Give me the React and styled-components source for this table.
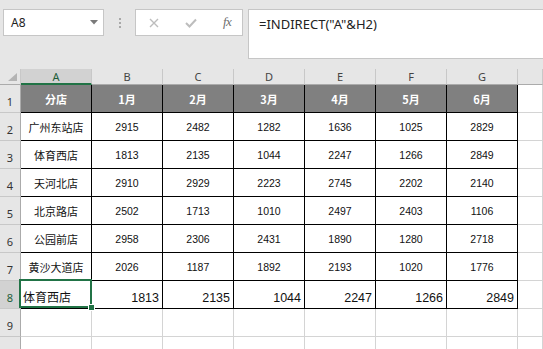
import React from 'react'
import styled, { createGlobalStyle } from 'styled-components';

// ______________________________________________
// Global styles:
const GlobalStyle = createGlobalStyle`
   html, body {
      margin: 0;
      padding: 0;
      background: #e6e6e6;
   }
`;

const UI_FONT = `"Noto Sans", "Liberation Sans", sans-serif`;
const CELL_FONT = `"Liberation Sans", "Noto Sans CJK SC", sans-serif`;

// Page wrapper:
const Page = styled.div`
   width: 543px;
   height: 349px;
   overflow: hidden;
   background: #e6e6e6;
   display: flex;
   flex-direction: column;
   & > * {
      flex-shrink: 0;
   }
`;

// Formula bar: __________________________________
const TopBar = styled.div`
   display: flex;
   align-items: flex-start;
   height: 69px;
   padding: 9px 0 0 3px;
   box-sizing: border-box;
`;

const NameBox = styled.div`
   width: 101px;
   height: 27px;
   box-sizing: border-box;
   background: #fff;
   border: 1px solid #c6c6c6;
   display: flex;
   align-items: center;
   justify-content: space-between;
   padding: 0 5px 0 7px;
   font-family: ${UI_FONT};
   font-size: 12px;
   color: #222;
`;

const Grip = styled.div`
   width: 31px;
   height: 27px;
   display: flex;
   flex-direction: column;
   align-items: center;
   justify-content: center;
   gap: 2px;
   span {
      width: 2px;
      height: 2px;
      background: #a8a8a8;
   }
`;

const FnBox = styled.div`
   width: 108px;
   height: 27px;
   box-sizing: border-box;
   background: #fff;
   border: 1px solid #c6c6c6;
   display: flex;
   align-items: center;
   gap: 26px;
   padding: 0 0 0 13px;
`;

const FxLabel = styled.span`
   font-family: "Liberation Serif", serif;
   font-style: italic;
   font-size: 13px;
   color: #6e6e6e;
   letter-spacing: -0.5px;
   margin-bottom: 2px;
`;

const FormulaBox = styled.div`
   flex: 1;
   margin-left: 5px;
   margin-right: -2px;
   height: 50px;
   box-sizing: border-box;
   background: #fff;
   border: 1px solid #c6c6c6;
   padding: 5px 0 0 10px;
   font-family: ${UI_FONT};
   font-size: 13px;
   color: #222;
`;

// Sheet grid: ___________________________________
const Sheet = styled.div`
   display: grid;
   grid-template-columns: 21px repeat(7, 71px) 1fr;
   grid-template-rows: 16px repeat(10, 28px);
   background: #fff;
`;

const Corner = styled.div`
   background: #e6e6e6;
   border-right: 1px solid #c8c8c8;
   border-bottom: 1px solid #ababab;
   box-sizing: border-box;
   display: flex;
   align-items: flex-end;
   justify-content: flex-end;
   padding: 0 3px 3px 0;
`;

const ColHead = styled.div`
   box-sizing: border-box;
   background: ${p => (p.$active ? '#d2d2d2' : '#e6e6e6')};
   border-right: 1px solid #c8c8c8;
   border-bottom: ${p => (p.$active ? '2px solid #217346' : '1px solid #ababab')};
   display: flex;
   align-items: center;
   justify-content: center;
   font-family: ${UI_FONT};
   font-size: 11px;
   color: ${p => (p.$active ? '#1e5e3a' : '#444')};
   padding-top: ${p => (p.$active ? '1px' : '0')};
`;

const RowHead = styled.div`
   box-sizing: border-box;
   background: ${p => (p.$active ? '#d2d2d2' : '#e6e6e6')};
   border-right: 1px solid #ababab;
   border-bottom: 1px solid #c8c8c8;
   display: flex;
   align-items: flex-end;
   justify-content: center;
   padding-bottom: 3px;
   font-family: ${UI_FONT};
   font-size: 11px;
   color: ${p => (p.$active ? '#1e5e3a' : '#333')};
`;

const Cell = styled.div`
   position: relative;
   box-sizing: border-box;
   border-right: 1px solid ${p => (p.$table ? '#000' : '#d4d4d4')};
   border-bottom: 1px solid ${p => (p.$table ? '#000' : '#d4d4d4')};
   background: ${p => (p.$head ? '#808080' : '#fff')};
   color: ${p => (p.$head ? '#fff' : '#111')};
   font-weight: ${p => (p.$head ? 700 : 400)};
   font-family: ${CELL_FONT};
   font-size: ${p => (p.$big ? '12.5px' : '10.5px')};
   display: flex;
   align-items: ${p => (p.$big ? 'flex-end' : 'center')};
   justify-content: ${p => p.$align || 'center'};
   padding: ${p => (p.$big ? '0 3px 3px 2px' : '0')};
   white-space: nowrap;
`;

const CnText = styled.span`
   font-family: "Noto Sans CJK SC", sans-serif;
   font-size: ${p => (p.$big ? '12px' : '11px')};
`;

// Selection frame over A8:
const Selection = styled.div`
   position: absolute;
   top: -2px;
   left: -2px;
   right: -1px;
   bottom: 0;
   border: 2px solid #217346;
   pointer-events: none;
   z-index: 2;
`;

const Handle = styled.div`
   position: absolute;
   right: -4px;
   bottom: -4px;
   width: 5px;
   height: 5px;
   background: #217346;
   box-shadow: 0 0 0 1px #fff;
`;

// ______________________________________________
// Data:
const COLS = ['A', 'B', 'C', 'D', 'E', 'F', 'G'];
const HEADER = ['分店', '1月', '2月', '3月', '4月', '5月', '6月'];
const ROWS = [
   ['广州东站店', 2915, 2482, 1282, 1636, 1025, 2829],
   ['体育西店', 1813, 2135, 1044, 2247, 1266, 2849],
   ['天河北店', 2910, 2929, 2223, 2745, 2202, 2140],
   ['北京路店', 2502, 1713, 1010, 2497, 2403, 1106],
   ['公园前店', 2958, 2306, 2431, 1890, 1280, 2718],
   ['黄沙大道店', 2026, 1187, 1892, 2193, 1020, 1776],
];
const RESULT = ['体育西店', 1813, 2135, 1044, 2247, 1266, 2849];

const App = () => {
    return (
        <Page>
            <GlobalStyle />
            <TopBar>
                <NameBox>
                    A8
                    <svg width="8" height="5" viewBox="0 0 8 5">
                        <polygon points="0,0 8,0 4,4.5" fill="#7a7a7a" />
                    </svg>
                </NameBox>
                <Grip><span /><span /><span /></Grip>
                <FnBox>
                    <svg width="10" height="10" viewBox="0 0 10 10">
                        <path d="M1 1 L9 9 M9 1 L1 9" stroke="#bdbdbd" strokeWidth="1.4" />
                    </svg>
                    <svg width="12" height="10" viewBox="0 0 12 10">
                        <path d="M1 5 L4.5 8.5 L11 1.5" stroke="#bdbdbd" strokeWidth="2" fill="none" />
                    </svg>
                    <FxLabel>fx</FxLabel>
                </FnBox>
                <FormulaBox>=INDIRECT("A"&amp;H2)</FormulaBox>
            </TopBar>

            <Sheet>
                {/* column headers */}
                <Corner>
                    <svg width="9" height="8" viewBox="0 0 9 8">
                        <polygon points="9,0 9,8 0,8" fill="#b4b4b4" />
                    </svg>
                </Corner>
                {COLS.map(c => (
                    <ColHead key={c} $active={c === 'A'}>{c}</ColHead>
                ))}
                <ColHead />

                {/* row 1: table header */}
                <RowHead>1</RowHead>
                {HEADER.map(h => (
                    <Cell key={h} $table $head><CnText>{h}</CnText></Cell>
                ))}
                <Cell />

                {/* rows 2-7 */}
                {ROWS.map((row, i) => (
                    <React.Fragment key={row[0]}>
                        <RowHead>{i + 2}</RowHead>
                        {row.map((v, j) => (
                            <Cell key={j} $table>
                                {j === 0 ? <CnText>{v}</CnText> : v}
                            </Cell>
                        ))}
                        <Cell />
                    </React.Fragment>
                ))}

                {/* row 8: lookup result */}
                <RowHead $active>8</RowHead>
                {RESULT.map((v, j) => (
                    <Cell key={j} $table $big $align={j === 0 ? 'flex-start' : 'flex-end'}>
                        {j === 0 ? <CnText $big>{v}</CnText> : v}
                        {j === 0 && (
                            <Selection>
                                <Handle />
                            </Selection>
                        )}
                    </Cell>
                ))}
                <Cell />

                {/* row 9 empty, row 10 only peeks in at the bottom */}
                {[9, 10].map(r => (
                    <React.Fragment key={r}>
                        <RowHead>{r === 9 ? r : ''}</RowHead>
                        {COLS.map(c => <Cell key={c} />)}
                        <Cell />
                    </React.Fragment>
                ))}
            </Sheet>
        </Page>
    )
}

export default App
